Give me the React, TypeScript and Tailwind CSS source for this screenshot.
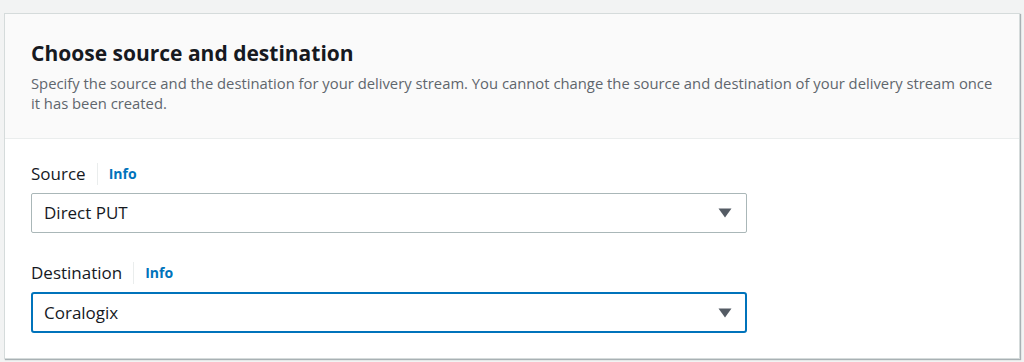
const font = { fontFamily: '"Open Sans", "Noto Sans", Arial, sans-serif' };

function Caret() {
    return (
        <svg width="14" height="10" viewBox="0 0 14 10" className="shrink-0">
            <path d="M0.5 0.5 H13.5 L7 9.5 Z" fill="#545b64" />
        </svg>
    );
}

interface FieldProps {
    label: string;
    value: string;
    focused?: boolean;
}

function SelectField({ label, value, focused }: FieldProps) {
    return (
        <div>
            <div className="flex items-center h-[22px]">
                <span className="text-[17px] text-[#16191f] leading-[22px]">{label}</span>
                <span className="mx-[11px] w-px h-[22px] bg-[#eaeded]" />
                <a className="text-[14px] font-bold text-[#0073bb] leading-[22px]">Info</a>
            </div>
            <div
                className={
                    focused
                        ? 'mt-[8px] w-[716px] h-[41px] flex items-center justify-between pl-[11px] pr-[13px] bg-white border-2 border-[#0073bb] rounded-[3px]'
                        : 'mt-[8px] w-[716px] h-[40px] flex items-center justify-between pl-[12px] pr-[14px] bg-white border border-[#aab7b8] rounded-[2px]'
                }
            >
                <span className="text-[17px] text-[#16191f]">{value}</span>
                <Caret />
            </div>
        </div>
    );
}

export default function App() {
    return (
        <div className="w-[1024px] h-[362px] bg-[#f2f3f3] pt-[13px] pl-[4px] pr-[4px] overflow-hidden" style={font}>
            <div className="h-[346px] bg-white border border-[#d5dbdb] shadow-[1px_1px_1px_0_rgba(0,28,36,0.3)] flex flex-col">
                <div className="h-[125px] bg-[#fafafa] border-b border-[#eaeded] pl-[26px] pr-[24px] pt-[25px]">
                    <h2 className="text-[21px] font-bold text-[#16191f] leading-[28px]">Choose source and destination</h2>
                    <p className="mt-[6px] text-[14.8px] text-[#5f666d] leading-[20px]">
                        Specify the source and the destination for your delivery stream. You cannot change the source and destination of your delivery stream once it has been created.
                    </p>
                </div>
                <div className="pl-[26px] pt-[24px] flex flex-col gap-[29px]">
                    <SelectField label="Source" value="Direct PUT" />
                    <SelectField label="Destination" value="Coralogix" focused />
                </div>
            </div>
        </div>
    );
}
